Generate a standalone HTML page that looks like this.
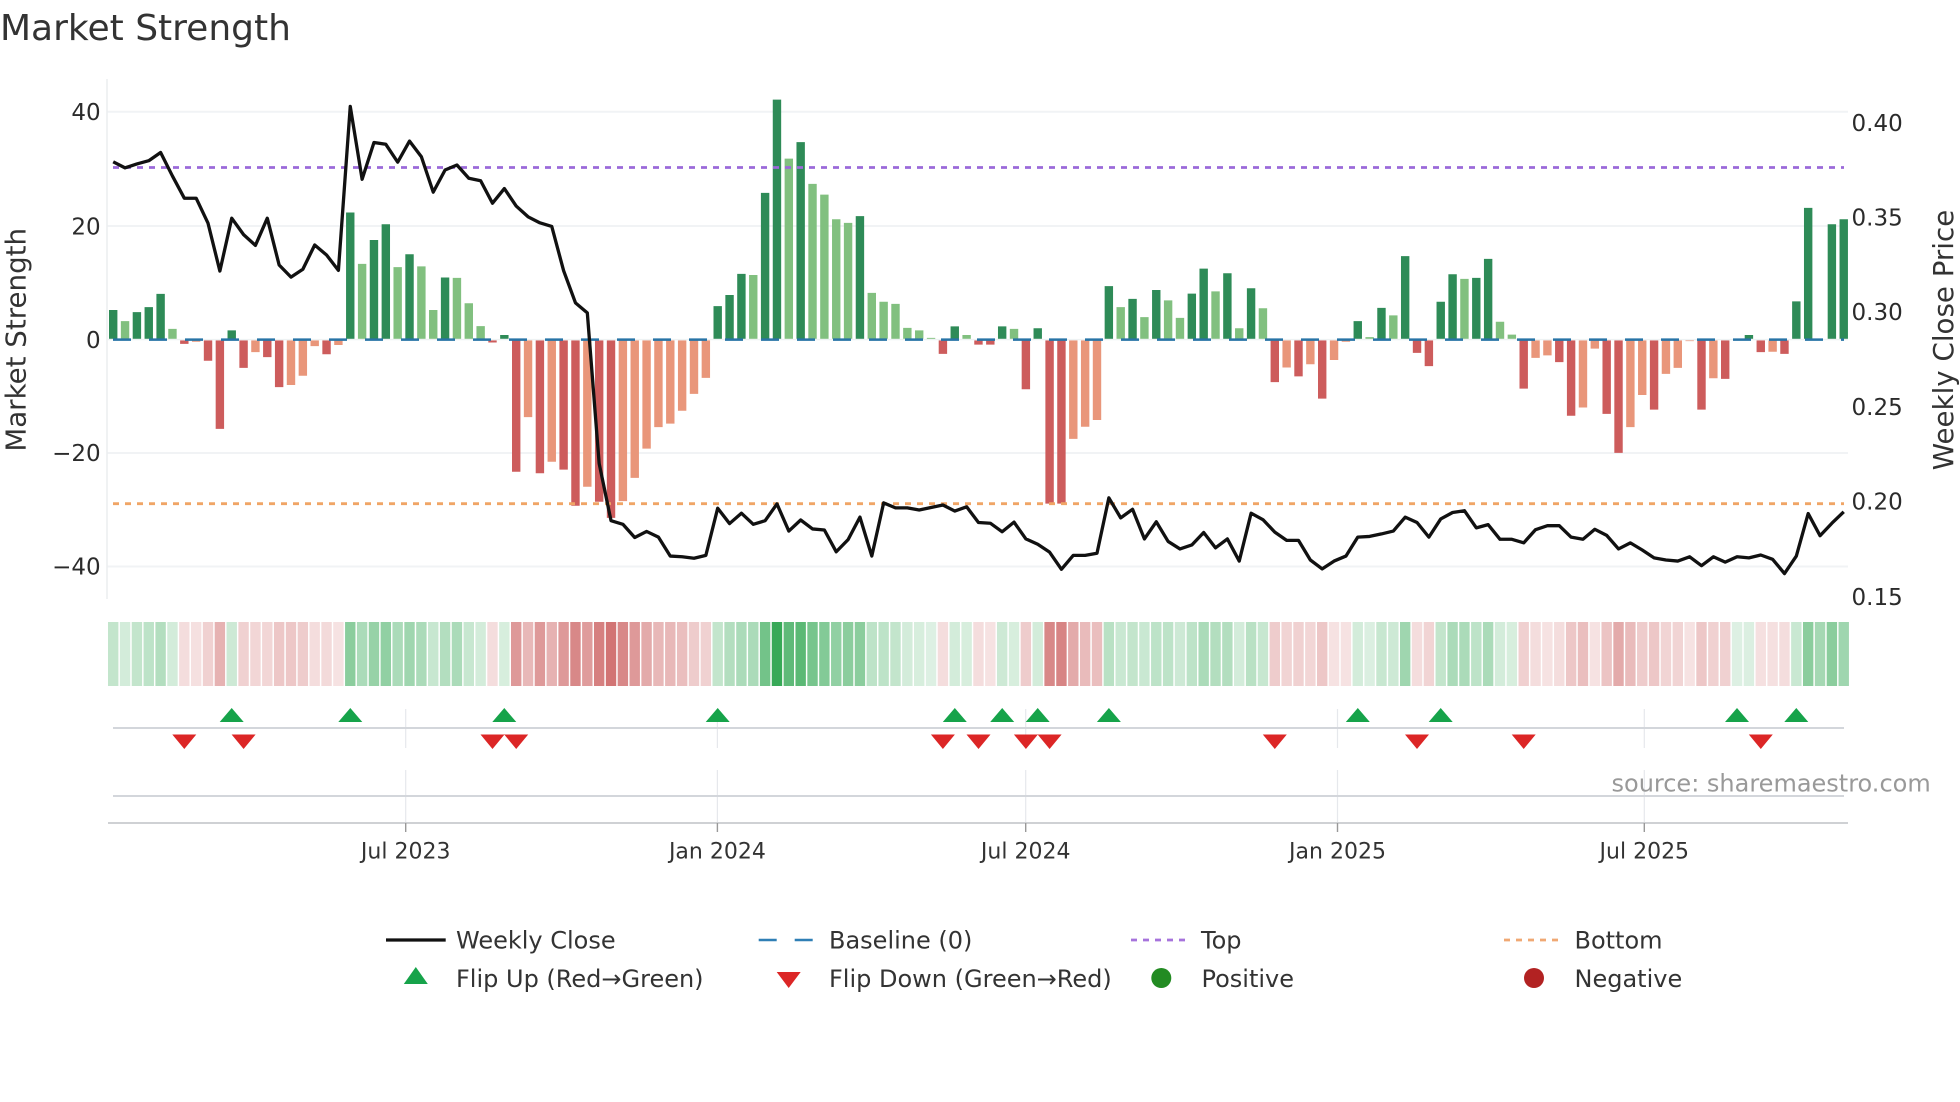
<!DOCTYPE html>
<html><head><meta charset="utf-8"><title>Market Strength</title>
<style>
html,body{margin:0;padding:0;background:#fff;width:1960px;height:1102px;overflow:hidden}
svg{display:block}
text{font-family:"DejaVu Sans","Liberation Sans",sans-serif;fill:#333}
.t{font-size:23px;fill:#2b2b2b}
.x{font-size:22px;text-anchor:middle;fill:#333}
.l{font-size:24px;fill:#333}
</style></head><body>
<svg xmlns="http://www.w3.org/2000/svg" width="1960" height="1102" viewBox="0 0 1960 1102">
<rect width="1960" height="1102" fill="#fff"/>
<text x="0" y="40" font-size="36">Market Strength</text>

<!-- grid -->
<path d="M107 111.8H1848M107 226H1848M107 453H1848M107 566.5H1848" stroke="#f1f3f5" stroke-width="2" fill="none"/>
<path d="M107 79V599" stroke="#eceef0" stroke-width="1.6" fill="none"/>

<!-- bars: x=index, y=zoomed px -->
<g transform="translate(113.2,60) scale(11.853,0.35714)" fill="none" stroke-width="0.709">
<path stroke="#2e8b57" d="M0 781V700M2 781V706M3 781V692M4 781V655M10 781V757M20 781V427M22 781V504M23 781V460M25 781V544M28 781V609M33 781V770M51 781V689M52 781V658M53 781V599M55 781V372M56 781V111M58 781V230M63 781V437M71 781V746M75 781V746M78 781V751M84 781V633M86 781V669M88 781V644M91 781V654M92 781V584M94 781V597M96 781V639M105 781V731M107 781V694M109 781V549M112 781V677M113 781V600M115 781V610M116 781V557M138 781V770M142 781V676M143 781V414M145 781V460M146 781V446"/>
<path stroke="#81c07f" d="M1 781V731M5 781V753M21 781V571M24 781V580M26 781V578M27 781V700M29 781V610M30 781V681M31 781V745M54 781V602M57 781V276M59 781V347M60 781V377M61 781V446M62 781V456M64 781V652M65 781V677M66 781V683M67 781V750M68 781V757M69 781V778M72 781V770M76 781V753M85 781V692M87 781V720M89 781V673M90 781V722M93 781V648M95 781V751M97 781V695M106 781V776M108 781V715M114 781V613M117 781V733M118 781V769"/>
<path stroke="#cd5c5c" d="M6 785V795M8 785V842M9 785V1033M11 785V862M13 785V832M14 785V916M18 785V824M32 785V791M34 785V1153M36 785V1157M38 785V1147M39 785V1248M41 785V1237M42 785V1282M70 785V823M73 785V797M74 785V797M77 785V922M79 785V1242M80 785V1242M98 785V902M100 785V886M102 785V948M110 785V820M111 785V857M119 785V920M122 785V846M123 785V996M126 785V991M127 785V1100M130 785V979M134 785V979M136 785V893M139 785V818M141 785V823"/>
<path stroke="#e9967a" d="M7 785V789M12 785V818M15 785V910M16 785V884M17 785V801M19 785V798M35 785V1000M37 785V1125M40 785V1195M43 785V1235M44 785V1170M45 785V1088M46 785V1028M47 785V1018M48 785V982M49 785V935M50 785V890M81 785V1061M82 785V1027M83 785V1008M99 785V861M101 785V852M103 785V840M104 785V789M120 785V834M121 785V827M124 785V973M125 785V808M128 785V1028M129 785V938M131 785V879M132 785V862M133 785V787M135 785V891M140 785V817"/>
</g>

<!-- reference lines -->
<path d="M107 339.6H1848" stroke="#eef2f3" stroke-width="1.4" fill="none"/>
<path d="M113 339.6H1844" stroke="#2874a6" stroke-width="2.5" stroke-dasharray="18 18" fill="none"/>
<path d="M113 167.5H1844" stroke="#9b69d9" stroke-width="2.8" stroke-dasharray="6 6" fill="none"/>
<path d="M113 503.7H1844" stroke="#f0a566" stroke-width="2.8" stroke-dasharray="6 6" fill="none"/>

<!-- weekly close -->
<g transform="translate(113.2,60) scale(11.853,0.35714)">
<polyline fill="none" stroke="#111" stroke-width="3.3" stroke-linejoin="round" vector-effect="non-scaling-stroke" style="vector-effect:non-scaling-stroke" points="0,285 1,302 2,291 3,282 4,259 5,325 6,387 7,387 8,457 9,591 10,443 11,489 12,519 13,443 14,574 15,608 16,586 17,518 18,546 19,589 20,130 21,334 22,231 23,236 24,286 25,227 26,271 27,370 28,308 29,294 30,331 31,338 32,401 33,360 34,409 35,439 36,456 37,466 38,590 39,680 40,708 41,1130 42,1290 43,1300 44,1337 45,1320 46,1336 47,1389 48,1391 49,1395 50,1387 51,1255 52,1298 53,1269 54,1300 55,1290 56,1243 57,1319 58,1288 59,1313 60,1316 61,1377 62,1343 63,1280 64,1389 65,1240 66,1254 67,1254 68,1260 69,1253 70,1246 71,1263 72,1251 73,1295 74,1297 75,1321 76,1294 77,1341 78,1356 79,1378 80,1426 81,1387 82,1387 83,1381 84,1226 85,1282 86,1258 87,1341 88,1293 89,1348 90,1369 91,1358 92,1323 93,1366 94,1341 95,1403 96,1269 97,1287 98,1322 99,1345 100,1345 101,1400 102,1425 103,1403 104,1389 105,1336 106,1334 107,1327 108,1319 109,1280 110,1295 111,1336 112,1285 113,1267 114,1262 115,1310 116,1301 117,1342 118,1342 119,1352 120,1315 121,1304 122,1304 123,1336 124,1342 125,1314 126,1331 127,1369 128,1352 129,1372 130,1394 131,1400 132,1403 133,1391 134,1416 135,1391 136,1406 137,1391 138,1394 139,1386 140,1398 141,1438 142,1389 143,1270 144,1332 145,1297 146,1265"/>
</g>

<!-- axis labels -->
<g text-anchor="end">
<text class="t" x="100.7" y="120.1">40</text>
<text class="t" x="100.7" y="234.3">20</text>
<text class="t" x="100.7" y="347.9">0</text>
<text class="t" x="100.7" y="461.2">−20</text>
<text class="t" x="100.7" y="574.7">−40</text>
</g>
<g>
<text class="t" x="1851.5" y="130.9">0.40</text>
<text class="t" x="1851.5" y="225.5">0.35</text>
<text class="t" x="1851.5" y="320.2">0.30</text>
<text class="t" x="1851.5" y="414.8">0.25</text>
<text class="t" x="1851.5" y="509.5">0.20</text>
<text class="t" x="1851.5" y="604.8">0.15</text>
</g>
<text transform="translate(25.5,339.8) rotate(-90)" text-anchor="middle" font-size="27.7">Market Strength</text>
<text transform="translate(1953,340) rotate(-90)" text-anchor="middle" font-size="27.7">Weekly Close Price</text>

<!-- heat strip -->
<g transform="translate(113.2,622) scale(11.853,64)" fill="none" stroke-width="0.877">
<g stroke="#37a957">
<path stroke-opacity=".17" d="M69 0V1M137 0V1"/>
<path stroke-opacity=".18" d="M106 0V1M138 0V1"/>
<path stroke-opacity=".2" d="M33 0V1M68 0V1M72 0V1M76 0V1M118 0V1"/>
<path stroke-opacity=".22" d="M1 0V1M5 0V1M31 0V1M67 0V1M71 0V1M78 0V1M95 0V1M105 0V1M117 0V1"/>
<path stroke-opacity=".25" d="M10 0V1M75 0V1M90 0V1M108 0V1"/>
<path stroke-opacity=".27" d="M85 0V1M87 0V1M142 0V1"/>
<path stroke-opacity=".28" d="M27 0V1M30 0V1M97 0V1M107 0V1"/>
<path stroke-opacity=".3" d="M0 0V1M2 0V1M51 0V1M66 0V1M86 0V1M112 0V1"/>
<path stroke-opacity=".33" d="M3 0V1M64 0V1M65 0V1M88 0V1M89 0V1M91 0V1M115 0V1"/>
<path stroke-opacity=".35" d="M84 0V1M96 0V1"/>
<path stroke-opacity=".38" d="M4 0V1M28 0V1M52 0V1M93 0V1M94 0V1"/>
<path stroke-opacity=".42" d="M21 0V1M24 0V1M26 0V1M29 0V1M53 0V1M54 0V1M92 0V1M113 0V1M114 0V1M116 0V1"/>
<path stroke-opacity=".45" d="M144 0V1"/>
<path stroke-opacity=".48" d="M25 0V1M109 0V1M146 0V1"/>
<path stroke-opacity=".52" d="M22 0V1"/>
<path stroke-opacity=".55" d="M23 0V1M61 0V1"/>
<path stroke-opacity=".58" d="M20 0V1M62 0V1M63 0V1M143 0V1M145 0V1"/>
<path stroke-opacity=".62" d="M60 0V1"/>
<path stroke-opacity=".68" d="M59 0V1"/>
<path stroke-opacity=".7" d="M55 0V1"/>
<path stroke-opacity=".8" d="M57 0V1"/>
<path stroke-opacity=".82" d="M58 0V1"/>
<path d="M56 0V1"/>
</g>
<g stroke="#c85555">
<path stroke-opacity=".17" d="M19 0V1M74 0V1M103 0V1M104 0V1M121 0V1M125 0V1M133 0V1"/>
<path stroke-opacity=".18" d="M7 0V1M139 0V1M140 0V1"/>
<path stroke-opacity=".2" d="M6 0V1M17 0V1M32 0V1M70 0V1M73 0V1M110 0V1M120 0V1M122 0V1M141 0V1"/>
<path stroke-opacity=".22" d="M18 0V1"/>
<path stroke-opacity=".24" d="M12 0V1M13 0V1M101 0V1"/>
<path stroke-opacity=".25" d="M99 0V1M111 0V1M131 0V1M132 0V1"/>
<path stroke-opacity=".27" d="M8 0V1M11 0V1M50 0V1M100 0V1M135 0V1M136 0V1"/>
<path stroke-opacity=".28" d="M119 0V1"/>
<path stroke-opacity=".3" d="M16 0V1M49 0V1M77 0V1M98 0V1M129 0V1"/>
<path stroke-opacity=".33" d="M14 0V1M15 0V1M102 0V1M123 0V1M130 0V1M134 0V1"/>
<path stroke-opacity=".35" d="M126 0V1"/>
<path stroke-opacity=".38" d="M48 0V1M83 0V1M124 0V1"/>
<path stroke-opacity=".4" d="M82 0V1M128 0V1"/>
<path stroke-opacity=".42" d="M35 0V1M46 0V1M47 0V1"/>
<path stroke-opacity=".45" d="M9 0V1M37 0V1"/>
<path stroke-opacity=".5" d="M45 0V1M81 0V1M127 0V1"/>
<path stroke-opacity=".58" d="M40 0V1"/>
<path stroke-opacity=".6" d="M34 0V1M36 0V1M38 0V1M44 0V1"/>
<path stroke-opacity=".7" d="M39 0V1M43 0V1M79 0V1"/>
<path stroke-opacity=".72" d="M80 0V1"/>
<path stroke-opacity=".75" d="M41 0V1"/>
<path stroke-opacity=".82" d="M42 0V1"/>
</g>
</g>

<!-- flip panel -->
<path d="M405.7 709V748M717.4 709V748M1025.7 709V748M1337.5 709V748M1644.3 709V748M405.7 770V823M717.4 770V823M1025.7 770V823M1337.5 770V823M1644.3 770V823" stroke="#e6e8ec" stroke-width="1.2" fill="none"/>
<path d="M113 728H1844M113 796H1844" stroke="#d3d6db" stroke-width="2" fill="none"/>
<path d="M108 823H1848" stroke="#cfd1d4" stroke-width="2" fill="none"/>
<path d="M405.7 823V832M717.4 823V832M1025.7 823V832M1337.5 823V832M1644.3 823V832" stroke="#999" stroke-width="1.4" fill="none"/>
<path fill="#16a34a" d="M231.7 708l12 14h-24zM350.3 708l12 14h-24zM504.3 708l12 14h-24zM717.7 708l12 14h-24zM954.8 708l12 14h-24zM1002.2 708l12 14h-24zM1037.7 708l12 14h-24zM1108.9 708l12 14h-24zM1357.8 708l12 14h-24zM1440.7 708l12 14h-24zM1737 708l12 14h-24zM1796.3 708l12 14h-24z"/>
<path fill="#dc2626" d="M184.3 749l12-14.5h-24zM243.6 749l12-14.5h-24zM492.5 749l12-14.5h-24zM516.2 749l12-14.5h-24zM942.9 749l12-14.5h-24zM978.5 749l12-14.5h-24zM1025.9 749l12-14.5h-24zM1049.6 749l12-14.5h-24zM1274.8 749l12-14.5h-24zM1417 749l12-14.5h-24zM1523.7 749l12-14.5h-24zM1760.8 749l12-14.5h-24z"/>
<text x="1611.5" y="791.5" font-size="24" style="fill:#999">source: sharemaestro.com</text>

<text class="x" x="405.7" y="858.3">Jul 2023</text>
<text class="x" x="717.4" y="858.3">Jan 2024</text>
<text class="x" x="1025.7" y="858.3">Jul 2024</text>
<text class="x" x="1337.5" y="858.3">Jan 2025</text>
<text class="x" x="1644.3" y="858.3">Jul 2025</text>

<!-- legend -->
<path d="M386 940H445.7" stroke="#111" stroke-width="3.3" fill="none"/>
<path d="M758.7 940H813" stroke="#2f7fb5" stroke-width="2.5" stroke-dasharray="18 18" fill="none"/>
<path d="M1131 940H1186" stroke="#a673dc" stroke-width="2.8" stroke-dasharray="6 6" fill="none"/>
<path d="M1504 940H1559" stroke="#f0a873" stroke-width="2.8" stroke-dasharray="6 6" fill="none"/>
<path fill="#16a34a" d="M415.8 967l12 17h-24z"/>
<path fill="#dc2626" d="M788.7 988l12-16h-24z"/>
<circle cx="1161.3" cy="978" r="10" fill="#228b22"/>
<circle cx="1534" cy="978" r="10" fill="#b22222"/>
<text class="l" x="456" y="948.5">Weekly Close</text>
<text class="l" x="829" y="948.5">Baseline (0)</text>
<text class="l" x="1201" y="948.5">Top</text>
<text class="l" x="1574.5" y="948.5">Bottom</text>
<text class="l" x="456" y="987">Flip Up (Red→Green)</text>
<text class="l" x="829" y="987">Flip Down (Green→Red)</text>
<text class="l" x="1201.5" y="987">Positive</text>
<text class="l" x="1574.5" y="987">Negative</text>
</svg>
</body></html>
